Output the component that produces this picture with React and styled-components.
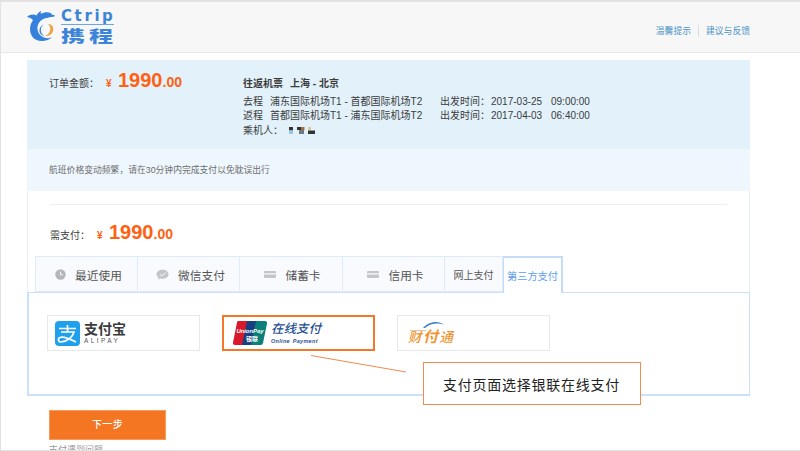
import React from "react"
import styled, { createGlobalStyle } from "styled-components"

const CJK = `"Liberation Sans", "Noto Sans CJK SC", sans-serif`

const GlobalStyle = createGlobalStyle`
  html, body {
    margin: 0;
    padding: 0;
    background: #fff;
    font-family: ${CJK};
  }
`

const Page = styled.div`
  position: relative;
  box-sizing: border-box;
  width: 800px;
  height: 451px;
  overflow: hidden;
  background: #fff;
  border-top: 2px solid #e2e2e2;
  border-left: 1px solid #e2e2e2;
  border-bottom: 1px solid #e2e2e2;
`

const Header = styled.header`
  box-sizing: border-box;
  height: 51px;
  display: flex;
  align-items: center;
  justify-content: space-between;
  padding: 0 50px 0 26px;
  background: #f7f7f7;
  border-bottom: 1px solid #e8e8e8;
`

const Logo = styled.div`
  display: flex;
  align-items: center;
  gap: 6px;
  margin-top: -2px;
`

const LogoWords = styled.div`
  display: flex;
  flex-direction: column;
  width: 53px;
  color: #3d85d8;
`

const LogoLatin = styled.div`
  font: 700 15px/13px "DejaVu Sans", sans-serif;
  letter-spacing: 2.600px;
  white-space: nowrap;
  height: 13px;
  padding-bottom: 1px;
  border-bottom: 1px solid #6aa5e4;
`

const LogoHan = styled.div`
  font: 900 16px/16px "Noto Sans CJK SC", sans-serif;
  letter-spacing: 2.600px;
  white-space: nowrap;
  margin-top: 2px;
  transform: scaleX(1.5);
  transform-origin: left center;
`

const HeaderLinks = styled.nav`
  display: flex;
  align-items: center;
  margin-top: 8px;
  font-size: 8.8px;
  line-height: 12px;
  color: #4a94c9;
`

const HeaderLink = styled.span`
  & + & {
    margin-left: 7px;
    padding-left: 7px;
    border-left: 1px solid #dcdcdc;
  }
`

const Main = styled.main`
  width: 723px;
  margin: 7px 0 0 26px;
`

const OrderPanel = styled.section`
  box-sizing: border-box;
  height: 89px;
  display: grid;
  grid-template-columns: 194px 1fr;
  padding: 8px 0 0 22px;
  background: #e2f1fa;
`

const AmountRow = styled.div`
  display: flex;
  align-items: baseline;
  color: #3c3c3c;
  font-size: 10px;
  margin-top: ${(p) => p.$top || 0}px;
`

const AmountLabel = styled.span`
  width: ${(p) => p.$width}px;
`

const Currency = styled.span`
  color: #ff6113;
  font-size: 10px;
  font-weight: 700;
  width: 12px;
`

const Price = styled.span`
  color: #ff6113;
  font: 700 20px/24px "Liberation Sans", sans-serif;
`

const Cents = styled.span`
  font-size: 14px;
`

const TripInfo = styled.div`
  padding-top: 9px;
  font-size: 10px;
  line-height: 14.7px;
  color: #3c3c3c;
  white-space: pre;
`

const TripTitle = styled.div`
  font-weight: 700;
  margin-bottom: 3px;
`

const TripCity = styled.span`
  margin-left: 7px;
`

const TripRow = styled.div`
  display: flex;
  align-items: center;
`

const Leg = styled.span`
  width: 27px;
`

const Route = styled.span`
  width: 170px;
`

const Departure = styled.span`
  width: 51px;
`

const DepartDate = styled.span`
  width: 60px;
`

const Notice = styled.div`
  box-sizing: border-box;
  height: 42px;
  padding: 15px 0 0 22px;
  background: #eef7fd;
  color: #6e6e6e;
  font-size: 8.8px;
  line-height: 13px;
`

const PayBlock = styled.section`
  box-sizing: border-box;
  height: 101px;
  padding: 13px 22px 0 7px;
  border: solid #e6eef6;
  border-width: 0 1px;
`

const Divider = styled.div`
  height: 1px;
  margin-left: 15px;
  background: #ededed;
`

const DuePay = styled.div`
  height: 51px;
  padding-left: 15px;
  overflow: hidden;
`

const Tabs = styled.div`
  display: flex;
  height: 36px;
  width: 600px;
`

const Tab = styled.div`
  box-sizing: border-box;
  width: ${(p) => p.$width}px;
  display: flex;
  align-items: center;
  justify-content: center;
  gap: ${(p) => p.$gap || 0}px;
  padding-left: ${(p) => p.$pad || 0}px;
  background: #f8fafd;
  border: 1px solid #deebfa;
  border-left-width: ${(p) => (p.$first ? 1 : 0)}px;
  color: #555;
  font-size: ${(p) => p.$size || 11.7}px;
  white-space: nowrap;
`

const ActiveTab = styled(Tab)`
  position: relative;
  z-index: 1;
  height: 37px;
  background: #fff;
  color: #5d9df0;
  border: 1px solid #c5dcf8;
  border-width: 2px 2px 0 1px;
`

const ThirdParty = styled.div`
  box-sizing: border-box;
  height: 104px;
  display: flex;
  gap: 22px;
  padding: 22px 0 0 18px;
  border: 2px solid #cbe0f9;
  border-width: 1px 1px 2px 2px;
`

const Card = styled.div`
  box-sizing: border-box;
  width: 153px;
  height: 36px;
  display: flex;
  align-items: center;
  border: ${(p) => (p.$selected ? "2px solid #f5782a" : "1px solid #e8e8e8")};
  padding-left: ${(p) => p.$pad}px;
  background: #fff;
`

const BrandText = styled.div`
  display: flex;
  flex-direction: column;
  margin-left: ${(p) => p.$gap}px;
  white-space: nowrap;
`

const AlipayHan = styled.div`
  font-size: 14px;
  font-weight: 700;
  line-height: 15px;
  color: #3b3b3b;
`

const AlipayLatin = styled.div`
  font: 500 6.5px/8px "Liberation Sans", sans-serif;
  letter-spacing: 2.4px;
  color: #555;
`

const UnionHan = styled.div`
  font-size: 12.5px;
  font-weight: 500;
  font-style: italic;
  line-height: 15px;
  color: #1f4f93;
`

const UnionLatin = styled.div`
  font: italic 700 5.5px/8px "Liberation Sans", sans-serif;
  letter-spacing: 0.3px;
  word-spacing: 1px;
  color: #1f4f93;
`

const TenpayWrap = styled.div`
  position: relative;
  width: 48px;
  height: 26px;
`

const TenpayText = styled.div`
  position: absolute;
  left: 0;
  bottom: 1px;
  display: flex;
  align-items: baseline;
  font-style: italic;
  font-weight: 500;
  font-size: 13.5px;
  line-height: 15px;
  letter-spacing: 1.500px;
  color: #ef9431;
  white-space: nowrap;
`

const TenpayBig = styled.span`
  font-size: 15px;
  font-weight: 700;
`

const NextButton = styled.button`
  display: block;
  box-sizing: border-box;
  width: 117px;
  height: 30px;
  margin: 14px 0 0 22px;
  padding: 0;
  border: 1px solid #f79a5e;
  background: #f57622;
  color: #fff;
  font: 500 10px/1 ${CJK};
  letter-spacing: 0.4px;
`

const FootHint = styled.div`
  margin: 4px 0 0 22px;
  font-size: 9px;
  line-height: 12px;
  color: #999;
`

const Callout = styled.div`
  position: absolute;
  left: 422px;
  top: 360px;
  box-sizing: border-box;
  width: 218px;
  height: 43px;
  padding-left: 19px;
  display: flex;
  align-items: center;
  background: #fff;
  border: 1px solid #f08b52;
  color: #222;
  font-size: 14px;
  letter-spacing: 0.75px;
  white-space: nowrap;
`

const Leader = styled.svg`
  position: absolute;
  left: 305px;
  top: 350px;
`

const TenpayArcSvg = styled.svg`
  position: absolute;
  left: 0;
  top: 0;
`

const IconSvg = styled.svg`
  display: block;
  flex: none;
`

const MaskedSvg = styled(IconSvg)`
  margin-left: 6px;
`

const ClockIcon = () => (
  <IconSvg width="11" height="11" viewBox="0 0 11 11">
    <circle cx="5.5" cy="5.5" r="5.2" fill="#b3b6ba" />
    <path d="M5.5 2.6v3.2h2.4" fill="none" stroke="#f8fafd" strokeWidth="1" />
  </IconSvg>
)

const WechatIcon = () => (
  <IconSvg width="13" height="11" viewBox="0 0 13 11">
    <path d="M6.5 .8c3.3 0 6 2 6 4.5s-2.7 4.5-6 4.5c-.8 0-1.500-.1-2.200-.3L2 10.400l.4-1.900C1.200 7.700.5 6.600.5 5.300.5 2.800 3.200.8 6.500.8z" fill="#c2c5c9" />
    <path d="M4 5.500l1.800 1.300L9.600 3.800" fill="none" stroke="#f8fafd" strokeWidth="1" />
  </IconSvg>
)

const CardIcon = () => (
  <IconSvg width="12" height="7" viewBox="0 0 12 7">
    <path d="M1 0h10a1 1 0 0 1 1 1v1.200H0V1a1 1 0 0 1 1-1z" fill="#c2c5c9" />
    <path d="M0 3.400h12V6a1 1 0 0 1-1 1H1a1 1 0 0 1-1-1z" fill="#c2c5c9" />
  </IconSvg>
)

const DolphinLogo = () => (
  <IconSvg width="28" height="30" viewBox="0 0 28 30">
    <path
      d="M0 6C3 3.200 7 3 9.500 4.500 10.500 2.500 12 .8 14 0c-.2 1-.3 1.900-.2 2.700C17 1.200 20.500.6 23 1.800c1 .5 1.500 1.200 1.800 1.800L28 4.600c0 .6-.6 1-1.500 1.100L22 6.200c-.3.500-1 .8-2 .8-2.500.1-5 1.200-6.800 3.300C11 12.700 10 15.500 10.500 18.500c.7 5 5.500 9 11 8.700 1.300-.1 2.600-.5 3.500-1.200C23 28.500 19 30 14.500 30 7.500 30 3 25 3 18c0-3.300 1-6.200 3-8.800C4.500 7.500 2.500 6.300 0 6z"
      fill="#3681de"
    />
    <path
      d="M21 13c3.800 0 6 3.200 5 7-.9 3.200-4.400 5.400-8 5 2.800-1.200 4.800-3.500 5.200-6 .3-2.200-.4-4.400-2.200-6z"
      fill="#f2a23c"
    />
    <path
      d="M16.500 13.500c-2.300 2-3.200 5-2.300 7.700.6 1.700 1.800 3 3.300 3.800-3.200-.3-5.200-3-5-6 .2-2.500 1.800-4.600 4-5.500z"
      fill="#3681de"
    />
  </IconSvg>
)

const AlipayMark = () => (
  <IconSvg width="25" height="25" viewBox="0 0 25 25">
    <rect width="25" height="25" rx="4" fill="#1ea0ec" />
    <path
      d="M4 7.500h17M12.500 4v7M6 11h13c-1.500 5-6 9-13 10-3 .2-3.500-3.500-1-4.500 4-1.500 10 1.500 16 4.500"
      fill="none"
      stroke="#fff"
      strokeWidth="1.700"
    />
  </IconSvg>
)

const UnionPayMark = () => (
  <IconSvg width="34" height="24" viewBox="0 0 34 24">
    <path d="M5 0h13L13 24H2a2 2 0 0 1-2-2.500L4 1.500A2 2 0 0 1 5 0z" fill="#d8192c" />
    <path d="M14 0h12l-5 24H9z" fill="#16407f" />
    <path d="M23 0h9a2 2 0 0 1 2 2.500L30 22a2.500 2.500 0 0 1-2.500 2H18z" fill="#0b7f7a" />
    <text x="3.500" y="12" fontSize="6" fontWeight="700" fontStyle="italic" fill="#fff" fontFamily="Liberation Sans, sans-serif" textLength="27">UnionPay</text>
    <text x="13" y="20" fontSize="6" fontWeight="700" fill="#fff" fontFamily="Noto Sans CJK SC, sans-serif">银联</text>
  </IconSvg>
)

const TenpayArc = () => (
  <TenpayArcSvg width="48" height="12" viewBox="0 0 48 12">
    <path d="M2 10.500h16" stroke="#c9a26a" strokeWidth=".6" />
    <path d="M15 8C20 1.500 30 0 36 4.500 29 2.500 22 3.500 17 8z" fill="#3f7fc4" />
  </TenpayArcSvg>
)

const Masked = () => (
  <MaskedSvg width="28" height="10" viewBox="0 0 28 10">
    <rect x="0" y="1" width="4" height="3.500" fill="#2f3438" />
    <rect x="0" y="4.500" width="4" height="3.500" fill="#9cc6e6" />
    <rect x="8" y="1" width="4" height="3" fill="#2f3438" />
    <rect x="12" y="1" width="3.500" height="3" fill="#b06a34" />
    <rect x="10" y="4" width="5" height="4" fill="#6a7a86" />
    <rect x="19" y="1" width="3" height="3" fill="#e2c898" />
    <rect x="19" y="4.500" width="7" height="3.500" fill="#2f3438" />
  </MaskedSvg>
)

const Amount = ({ label, width, top }) => (
  <AmountRow $top={top}>
    <AmountLabel $width={width}>{label}</AmountLabel>
    <Currency>¥</Currency>
    <Price>
      1990<Cents>.00</Cents>
    </Price>
  </AmountRow>
)

const legs = [
  { leg: "去程", route: "浦东国际机场T1 - 首都国际机场T2", date: "2017-03-25", time: "09:00:00" },
  { leg: "返程", route: "首都国际机场T1 - 浦东国际机场T2", date: "2017-04-03", time: "06:40:00" }
]

export default function App() {
  return (
    <>
      <GlobalStyle />
      <Page>
        <Header>
          <Logo>
            <DolphinLogo />
            <LogoWords>
              <LogoLatin>Ctrip</LogoLatin>
              <LogoHan>携程</LogoHan>
            </LogoWords>
          </Logo>
          <HeaderLinks>
            <HeaderLink>温馨提示</HeaderLink>
            <HeaderLink>建议与反馈</HeaderLink>
          </HeaderLinks>
        </Header>

        <Main>
          <OrderPanel>
            <div>
              <Amount label="订单金额：" width={57} />
            </div>
            <TripInfo>
              <TripTitle>
                往返机票<TripCity>上海 - 北京</TripCity>
              </TripTitle>
              {legs.map((item) => (
                <TripRow key={item.leg}>
                  <Leg>{item.leg}</Leg>
                  <Route>{item.route}</Route>
                  <Departure>出发时间：</Departure>
                  <DepartDate>{item.date}</DepartDate>
                  <span>{item.time}</span>
                </TripRow>
              ))}
              <TripRow>
                乘机人：
                <Masked />
              </TripRow>
            </TripInfo>
          </OrderPanel>

          <Notice>航班价格变动频繁，请在30分钟内完成支付以免耽误出行</Notice>

          <PayBlock>
            <Divider />
            <DuePay>
              <Amount label="需支付：" width={47} top={15} />
            </DuePay>
            <Tabs>
              <Tab $width={103} $gap={9} $pad={4} $first>
                <ClockIcon />
                最近使用
              </Tab>
              <Tab $width={102} $gap={9} $pad={4}>
                <WechatIcon />
                微信支付
              </Tab>
              <Tab $width={103} $gap={9} $pad={3}>
                <CardIcon />
                储蓄卡
              </Tab>
              <Tab $width={102} $gap={9} $pad={4}>
                <CardIcon />
                信用卡
              </Tab>
              <Tab $width={58} $size={10}>
                网上支付
              </Tab>
              <ActiveTab $width={60} $size={10.2}>
                第三方支付
              </ActiveTab>
            </Tabs>
          </PayBlock>

          <ThirdParty>
            <Card $pad={7}>
              <AlipayMark />
              <BrandText $gap={4}>
                <AlipayHan>支付宝</AlipayHan>
                <AlipayLatin>ALIPAY</AlipayLatin>
              </BrandText>
            </Card>
            <Card $selected $pad={9}>
              <UnionPayMark />
              <BrandText $gap={4}>
                <UnionHan>在线支付</UnionHan>
                <UnionLatin>Online Payment</UnionLatin>
              </BrandText>
            </Card>
            <Card $pad={10}>
              <TenpayWrap>
                <TenpayArc />
                <TenpayText>
                  财<TenpayBig>付</TenpayBig>通
                </TenpayText>
              </TenpayWrap>
            </Card>
          </ThirdParty>

          <NextButton>下一步</NextButton>
          <FootHint>支付遇到问题</FootHint>
        </Main>

        <Leader width="110" height="30" viewBox="0 0 110 30">
          <path d="M5 3.500L100 20" stroke="#f08b52" strokeWidth="1" fill="none" />
        </Leader>
        <Callout>支付页面选择银联在线支付</Callout>
      </Page>
    </>
  )
}
